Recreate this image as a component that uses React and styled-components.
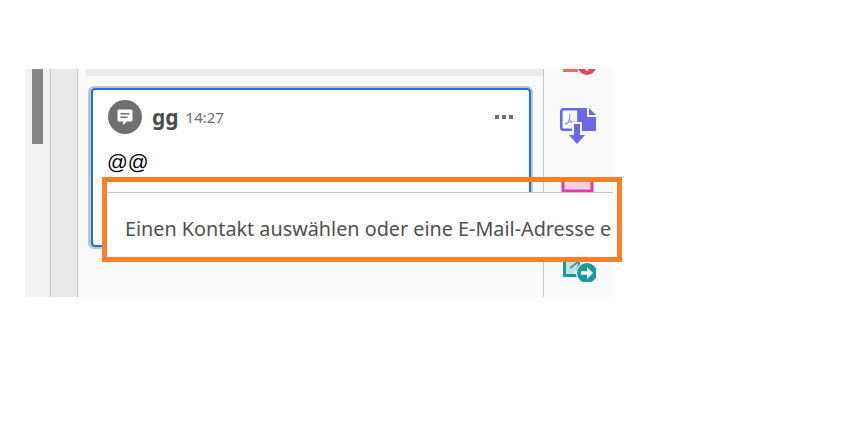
import React from 'react';
import styled, { createGlobalStyle } from 'styled-components';

const GlobalStyle = createGlobalStyle`
	html, body {
		margin: 0;
		background: #fff;
	}
	* {
		box-sizing: border-box;
	}
`;

const Stage = styled.div`
	position: relative;
	width: 855px;
	height: 429px;
	padding: 69px 0 0 25px;
	font-family: 'Noto Sans', 'Open Sans', sans-serif;
	overflow: hidden;
`;

const Frame = styled.div`
	display: flex;
	width: 588px;
	height: 228px;
	overflow: hidden;
	position: relative;
`;

const ScrollRail = styled.div`
	width: 26px;
	flex: none;
	padding-left: 7px;
	background: #f2f2f2;
	border-right: 1px solid #c6c6c6;
`;

const ScrollThumb = styled.div`
	width: 11px;
	height: 75px;
	background: #868686;
`;

const NavRail = styled.div`
	width: 27px;
	flex: none;
	background: #ebebeb;
	border-right: 1px solid #c6c6c6;
`;

const Main = styled.div`
	position: relative;
	width: 466px;
	flex: none;
	background: #fafafa;
	border-right: 1px solid #c6c6c6;
`;

const PrevCommentEdge = styled.div`
	height: 7px;
	margin-left: 8px;
	background: #ebebeb;
`;

const CommentCard = styled.div`
	width: 445px;
	height: 163px;
	margin: 10px 0 0 10px;
	border-style: solid;
	border-color: #c4c4c4;
	border-width: 2px 2px 2px 3px;
	border-radius: 6px;
	background: #fff;
`;

const CardInner = styled.div`
	height: 100%;
	border: 2px solid #1473e6;
	border-radius: 4px;
	padding: 10px 16px 0 15px;
`;

const CardHeader = styled.div`
	display: flex;
	align-items: center;
	height: 34px;
`;

const Avatar = styled.div`
	width: 34px;
	height: 34px;
	border-radius: 50%;
	background: #707070;
	display: flex;
	align-items: center;
	justify-content: center;
	flex: none;
`;

const Author = styled.span`
	margin-left: 10px;
	font-size: 21px;
	font-weight: 700;
	color: #4b4b4b;
	line-height: 30px;
`;

const Time = styled.span`
	margin-left: 7px;
	font-size: 15px;
	color: #6e6e6e;
`;

const MoreDots = styled.div`
	display: flex;
	gap: 3px;
	margin-left: auto;
`;

const Dot = styled.span`
	width: 4px;
	height: 4px;
	background: #6e6e6e;
`;

const CommentText = styled.div`
	margin: 15px 0 0 -1px;
	font-family: 'Liberation Sans', Arial, sans-serif;
	font-size: 20.5px;
	line-height: 26px;
	color: #000;
`;

const MentionPopover = styled.div`
	position: absolute;
	left: 25px;
	top: 123px;
	width: 600px;
	height: 70px;
	padding: 22px 0 0 22px;
	background: #fff;
	border-top: 1px solid #c6c6c6;
	font-size: 19.8px;
	line-height: 28px;
	color: #505050;
	white-space: nowrap;
	z-index: 2;
`;

const ToolSidebar = styled.div`
	flex: 1;
	display: flex;
	flex-direction: column;
	gap: 33px;
	margin-top: -30px;
	padding-left: 16px;
	background: #fafafa;
`;

const ToolIcon = styled.svg`
	width: 36px;
	height: 36px;
	flex: none;
	display: block;
`;

const Highlight = styled.div`
	position: absolute;
	left: 102px;
	top: 177px;
	width: 520px;
	height: 85px;
	border: 5px solid #ff7f27;
	z-index: 3;
`;

const CommentGlyph = () => (
	<svg width="18" height="18" viewBox="0 0 18 18">
		<path
			fill="#fff"
			d="M3 1.5h12a1.5 1.5 0 0 1 1.5 1.5v9a1.5 1.5 0 0 1-1.5 1.5h-4.2L7 17v-3.5H3A1.5 1.5 0 0 1 1.5 12V3A1.5 1.5 0 0 1 3 1.5z"
		/>
		<path fill="#707070" d="M4.5 5h9v1.5h-9zM4.5 8.5h7V10h-7z" />
	</svg>
);

const RedIcon = () => (
	<ToolIcon viewBox="0 0 36 36">
		<rect x="3" y="30" width="15" height="3" fill="#ea6a70" />
		<circle cx="27" cy="27" r="9" fill="#e34850" />
		<rect x="25.500" y="30" width="3" height="1.500" fill="#fff" />
	</ToolIcon>
);

const PdfIcon = () => (
	<ToolIcon viewBox="0 0 36 36">
		<path
			fill="none"
			stroke="#6a68e8"
			strokeWidth="2.6"
			d="M3.5 1.3h15v20.4h-15a2.2 2.2 0 0 1-2.2-2.2V3.5a2.2 2.2 0 0 1 2.2-2.2z"
		/>
		<path fill="#6a68e8" d="M18 0h9v9h9v14H18z" />
		<path fill="#6a68e8" d="M29 0l7 7h-7z" />
		<path
			fill="none"
			stroke="#a3a2f0"
			strokeWidth="1.3"
			d="M9.5 6c1 5-1.5 9-4 11M9 11c1.5 2.5 3.5 4 6 4.500M5 15.500c3-1.500 6-2 10-1.500"
		/>
		<path fill="#fafafa" d="M12 14h10v11h5l-10 11L7 25h5z" />
		<path fill="#6a68e8" d="M14 16h6v11h5l-8 9-8-9h5z" />
	</ToolIcon>
);

const PinkIcon = () => (
	<ToolIcon viewBox="0 0 36 36">
		<rect x="3" y="-5" width="29" height="19" fill="#f8d0e6" stroke="#e0409c" strokeWidth="3" />
	</ToolIcon>
);

const TealIcon = () => (
	<ToolIcon viewBox="0 0 36 36">
		<path
			fill="none"
			stroke="#1a9a9f"
			strokeWidth="3"
			d="M4.500 3h14v17a10 10 0 0 0 1 9.500h-15z"
		/>
		<path fill="#bfe3e3" d="M6 5h12v14l-4 9H6z" />
		<path fill="none" stroke="#4b8f92" strokeWidth="1.600" d="M10 22l8-6" />
		<circle cx="27" cy="27" r="11" fill="#fafafa" />
		<circle cx="27" cy="27" r="10" fill="#1a9a9f" />
		<path fill="#fff" d="M21 25.200h6V21l6 6-6 6v-4.200h-6z" />
	</ToolIcon>
);

const App = () => (
	<Stage>
		<GlobalStyle />
		<Frame>
			<ScrollRail>
				<ScrollThumb />
			</ScrollRail>
			<NavRail />
			<Main>
				<PrevCommentEdge />
				<CommentCard>
					<CardInner>
						<CardHeader>
							<Avatar>
								<CommentGlyph />
							</Avatar>
							<Author>gg</Author>
							<Time>14:27</Time>
							<MoreDots>
								<Dot />
								<Dot />
								<Dot />
							</MoreDots>
						</CardHeader>
						<CommentText>@@</CommentText>
					</CardInner>
				</CommentCard>
				<MentionPopover>Einen Kontakt auswählen oder eine E-Mail-Adresse e</MentionPopover>
			</Main>
			<ToolSidebar>
				<RedIcon />
				<PdfIcon />
				<PinkIcon />
				<TealIcon />
			</ToolSidebar>
		</Frame>
		<Highlight />
	</Stage>
);

export default App;
